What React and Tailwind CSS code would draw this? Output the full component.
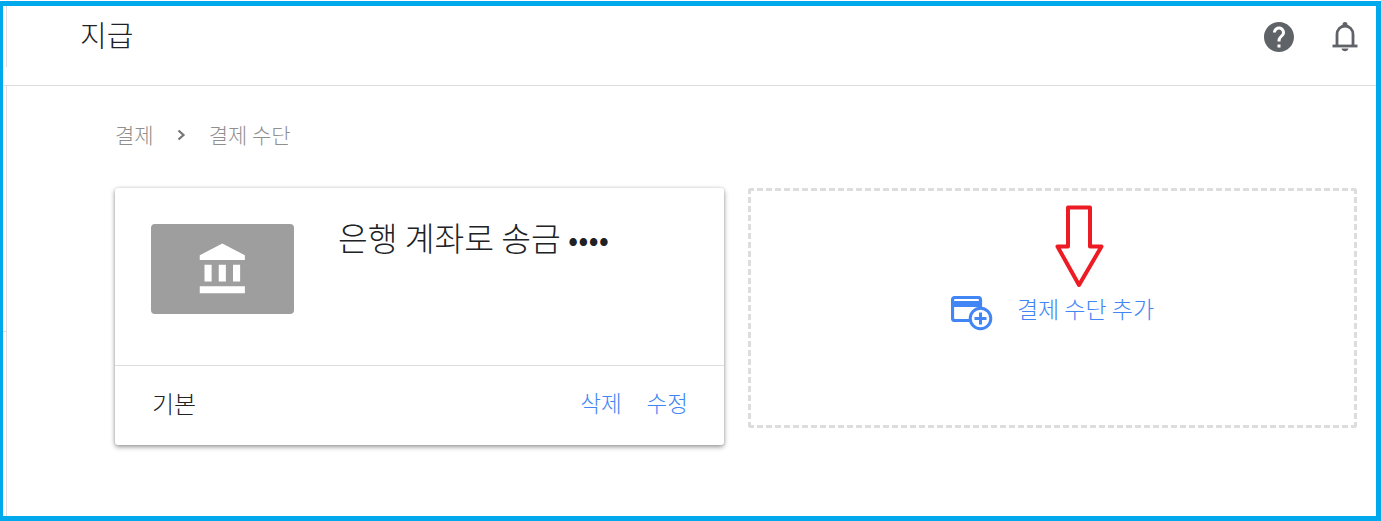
import React from 'react';

const cjk = "font-['Noto_Sans_CJK_KR','Liberation_Sans',sans-serif]";

function HelpIcon() {
  return (
    <svg width="36" height="36" viewBox="0 0 24 24" fill="#5f6368">
      <path d="M12 2C6.48 2 2 6.48 2 12s4.48 10 10 10 10-4.48 10-10S17.52 2 12 2zm1 17h-2v-2h2v2zm2.07-7.75l-.9.92C13.45 12.9 13 13.5 13 15h-2v-.5c0-1.1.45-2.1 1.17-2.83l1.24-1.26c.37-.36.59-.86.59-1.41 0-1.1-.9-2-2-2s-2 .9-2 2H8c0-2.21 1.79-4 4-4s4 1.790 4 4c0 .88-.36 1.68-.93 2.25z" />
    </svg>
  );
}

function BellIcon() {
  return (
    <svg width="26" height="32" viewBox="0 0 26 32" fill="none">
      <path d="M5 24V13.500C5 8.500 8.500 5 13 5s8 3.500 8 8.500V24" stroke="#5f6368" strokeWidth="2.800" />
      <path d="M10.500 5V3.500a2.500 2.500 0 0 1 5 0V5z" fill="#5f6368" />
      <path d="M0.500 25h25" stroke="#5f6368" strokeWidth="2.800" />
      <path d="M9.500 27.500h7c-.4 1.800-1.800 2.700-3.500 2.700s-3.100-.9-3.500-2.700z" fill="#5f6368" />
    </svg>
  );
}

function BankIcon() {
  return (
    <svg className="ml-[2px]" width="57" height="57" viewBox="0 0 24 24" fill="#ffffff">
      <path d="M4 10v7h3v-7H4zm6 0v7h3v-7h-3zM2 22h19v-3H2v3zm14-12v7h3v-7h-3zm-4.500-9L2 6v2h19V6l-9.500-5z" />
    </svg>
  );
}

function AddCardIcon() {
  return (
    <svg className="mt-[10px]" width="42" height="35" viewBox="0 0 42 35" fill="none">
      <rect x="1.500" y="1.500" width="28" height="23" rx="2.500" stroke="#4285f4" strokeWidth="3.200" />
      <rect x="1.500" y="5" width="28" height="6" fill="#4285f4" />
      <circle cx="29.500" cy="22.500" r="10.300" fill="#ffffff" stroke="#4285f4" strokeWidth="3" />
      <path d="M29.500 16.500v12M23.500 22.500h12" stroke="#4285f4" strokeWidth="3" />
    </svg>
  );
}

function RedArrow() {
  return (
    <svg className="absolute left-[1054px] top-[204px]" width="50" height="86" viewBox="0 0 50 86" fill="none">
      <path d="M14 3.500h22V42.500h11.500L25 81 3.500 42.500H14z" stroke="#ed1c24" strokeWidth="4" strokeLinejoin="round" fill="#ffffff" />
    </svg>
  );
}

export default function App() {
  return (
    <div className={`relative w-[1381px] h-[521px] bg-white pt-px ${cjk}`}>
      <div className="h-full flex flex-col border-t-[5px] border-l-[3px] border-r-[5px] border-b-[5px] border-[#00a8ec]">
        {/* 헤더 */}
        <header className="h-[80px] shrink-0 flex border-b border-[#dddddd]">
          <div className="w-px h-[61px] ml-[3px] bg-[#dddddd]" />
          <h1 className="ml-[73px] mt-[8px] text-[29px] leading-[40px] font-light text-[#202124]">지급</h1>
          <div className="ml-auto flex gap-[35px] pr-[18px] pt-[13px] h-fit items-start">
            <HelpIcon />
            <div className="pt-[2px]"><BellIcon /></div>
          </div>
        </header>

        {/* 본문 */}
        <main className="flex-1 ml-[3px] border-l border-[#dddddd] pl-[108px]">
          <nav className="flex items-center h-[24px] mt-[37px] mb-[41px] text-[21px] font-light text-[#8f8f8f]">
            <span>결제</span>
            <svg className="ml-[23px] mr-[23px]" width="9" height="12" viewBox="0 0 9 12" fill="none">
              <path d="M1.500 1.500L6.500 6l-5 4.500" stroke="#757575" strokeWidth="2.200" />
            </svg>
            <span>결제 수단</span>
          </nav>

          <div className="flex gap-[24px]">
            {/* 결제 수단 카드 */}
            <div className="w-[609px] h-[257px] flex flex-col bg-white rounded-[3px] shadow-[0_2px_5px_rgba(0,0,0,0.4),0_0_3px_rgba(0,0,0,0.12)]">
              <div className="h-[178px] flex pt-[36px] pl-[36px] border-b border-[#dddddd] shrink-0">
                <div className="w-[143px] h-[90px] flex items-center justify-center rounded-[4px] bg-[#9e9e9e]">
                  <BankIcon />
                </div>
                <p className="ml-[44px] -mt-[11px] text-[32.400px] leading-[48px] font-light text-[#202124]">은행 계좌로 송금 ••••</p>
              </div>
              <div className="flex-1 flex items-center justify-between pl-[37px] pr-[36px] pb-[6px] text-[24px] font-light">
                <span className="text-[#202124]">기본</span>
                <div className="flex gap-[25px] text-[#4285f4] text-[22.500px]">
                  <span>삭제</span>
                  <span>수정</span>
                </div>
              </div>
            </div>

            {/* 결제 수단 추가 */}
            <div className="w-[609px] h-[240px] flex items-center justify-center gap-[24px] rounded-[3px] border-[3px] border-dashed border-[#dddddd]">
              <AddCardIcon />
              <span className="text-[23px] font-light text-[#4285f4]">결제 수단 추가</span>
            </div>
          </div>
        </main>
      </div>
      <div className="absolute left-[3px] top-[331px] w-[3px] h-px bg-[#dddddd]" />
      <RedArrow />
    </div>
  );
}
